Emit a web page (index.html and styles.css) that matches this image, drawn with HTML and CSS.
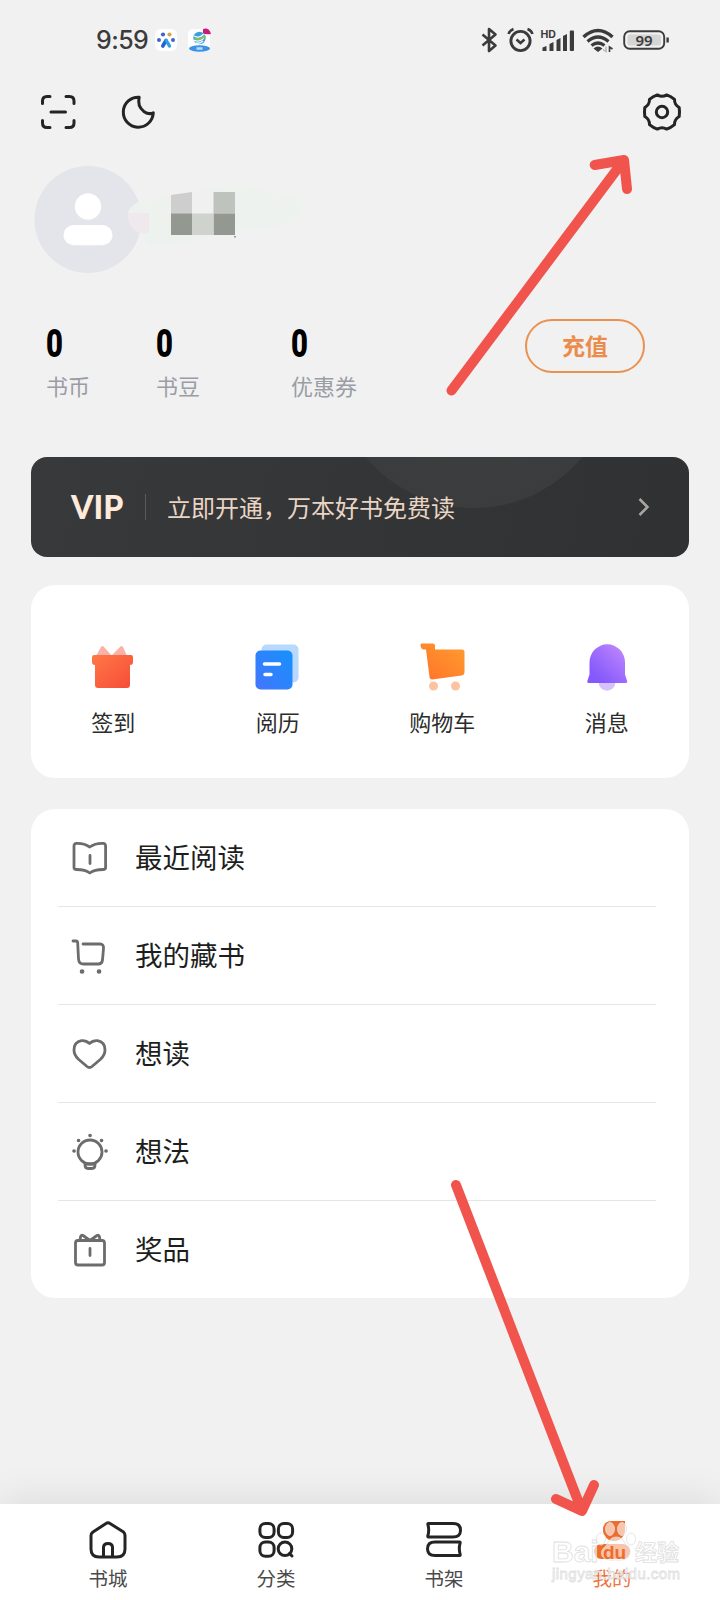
FILE: index.html
```html
<!DOCTYPE html>
<html lang="zh-CN">
<head>
<meta charset="utf-8">
<title>我的</title>
<link rel="stylesheet" href="styles.css">
</head>
<body>
<div class="screen">
  <header class="status">
    <span class="time">9:59</span>
    <svg class="app-a" width="24" height="24" viewBox="0 0 24 24"><rect x="1" y="1" width="22" height="22" rx="6" fill="#fff"/><g fill="#4264c8"><circle cx="9" cy="6.500" r="2.100"/><circle cx="5" cy="12" r="2"/><circle cx="19" cy="12" r="2"/></g><circle cx="15.500" cy="6.500" r="2.100" fill="#d3a550"/><path d="M8.800 18L12 12.500" fill="none" stroke="#2563cf" stroke-width="3.600" stroke-linecap="round"/><path d="M12.300 12.500l3.200 5.500" stroke="#2fa0e4" stroke-width="3.400" stroke-linecap="round"/></svg>
    <svg class="app-b" width="26" height="26" viewBox="0 0 26 26"><rect x="1" y="2" width="22" height="22" rx="5" fill="#fff"/><circle cx="12.500" cy="11" r="6.200" fill="#3e9fd8"/><path d="M7 9q5 3 10-2M7 13q5 3 10-2M9 16q4 1 7-2" stroke="#fff" stroke-width="1.300" fill="none"/><path d="M8 11q5 3 10-2" stroke="#8fc652" stroke-width="1.800" fill="none"/><path d="M16 2q6-2 8 5-6 1-8-1z" fill="#c91b77"/><ellipse cx="12.500" cy="21.500" rx="10.500" ry="3.200" fill="#3c92e4"/><path d="M9.500 21.500h6" stroke="#b7dcfa" stroke-width="2.500"/></svg>
    <div class="status-right">
      <svg width="192" height="30" viewBox="0 0 192 30" fill="none" stroke="#3b3b3b" stroke-width="2.600">
        <path d="M2.500 9.500l13 11-6.500 5.500V4l6.500 5.500-13 11" stroke-linejoin="round" stroke-width="2.600"/>
        <circle cx="40.500" cy="16" r="9.600" stroke-width="2.900"/><path d="M36.500 14.500l4 3.500 4-3.500M28.500 9q1-3.500 5-5M52.500 9q-1-3.500-5-5" stroke-width="2.500"/>
        <g fill="#3b3b3b" stroke="none"><path d="M62.500 22.500l4-1.500v5h-4zM69.500 19l4-2v9h-4zM76.500 15l4-2v13h-4zM83 11l4-2v17h-4z"/><rect x="89.800" y="5.500" width="4.200" height="20.500" rx="1"/><path d="M113.500 23.500q4.500-4 9 0L118 27z"/></g>
        <path d="M103.500 12q14.500-13 29 0" stroke-width="3.500"/><path d="M107.500 16.500q10.500-9 21 0M111.500 20.500q6.500-5 13 0" stroke-width="3.200"/>
        <path d="M126 21.500v5l-3-2" stroke="#b8b8b8" stroke-width="1.500"/><path d="M129.500 27v-5l3 2" stroke-width="1.600"/>
        <rect x="144.200" y="6.200" width="40" height="17.600" rx="5.500" stroke-width="1.900"/><rect x="147.500" y="9.500" width="33.500" height="11" rx="2.500" fill="#d5d5d5" stroke="none"/><path d="M187.600 12.500v5" stroke-width="2.400"/>
        <text x="60.500" y="12.800" class="hd">HD</text><text x="164" y="20.700" class="battery">99</text>
      </svg>
    </div>
  </header>

  <nav class="toolbar">
    <svg width="36" height="36" viewBox="0 0 36 36" class="line"><path d="M2.500 9.500V7Q2.500 2.500 7 2.500H10M26 2.500h3.500Q34 2.500 34 7v2.500M34 26.500V29q0 4.500-4.500 4.500H26M10 33.500H7Q2.500 33.500 2.500 29V26.500M11 18h14.500"/></svg>
    <svg class="moon" width="36" height="36" viewBox="0 0 36 36"><path class="line" d="M19.200 3.200A15 15 0 1 0 33.300 18.800Q29 21 23.800 17.400Q17 12 19.200 3.200z"/></svg>
    <svg class="gear" width="40" height="40" viewBox="-20 -20 40 40"><path class="line" d="M17.200-4.500Q17.800 0 17.200 4.500Q12.400 7.200 12.500 12.600Q9 15.600 4.700 17.100Q0 14.300 -4.700 17.100Q-9 15.600 -12.500 12.600Q-12.400 7.200 -17.200 4.500Q-17.800 0 -17.200-4.500Q-12.400-7.200 -12.500-12.600Q-9-15.600 -4.700-17.100Q0-14.300 4.700-17.100Q9-15.600 12.500-12.600Q12.400-7.200 17.200-4.500z"/><circle class="line" r="5.700"/></svg>
  </nav>

  <section class="profile">
    <svg width="290" height="108" viewBox="0 0 290 108">
      <circle cx="54" cy="53.500" r="53.500" fill="#e4e5eb"/><circle cx="54" cy="40.500" r="13.200" fill="#fff"/><rect x="29.500" y="59" width="49" height="20.300" rx="10.100" fill="#fff"/>
      <path d="M94 46q5-11 21-12l75-14q20-4 35 3l30 6q15 2 14 12-1 14-18 18l-48 6-40 9q-22 6-47 6-6-6-9-14-9-2-13-20z" fill="#eef2ef"/><path d="M94 47h21v20q-17 2-21-14z" fill="#efe9ed"/>
      <path d="M137 29l21-3v22h-21z" fill="#cecece"/><path d="M158 26h21.500v21.500H158z" fill="#f0f0f0"/><path d="M179.500 26H201v21.500h-21.500z" fill="#bec4bd"/><path d="M137 47.500h21V69h-21zM179.500 47.500H201V69h-21.500z" fill="#939991"/><path d="M158 47.500h21.500V69H158z" fill="#ced3cd"/><path d="M200 70h2v1.500h-2z" fill="#999"/>
    </svg>
  </section>

  <section class="stats">
    <div class="stat stat-coin"><b>0</b><span>书币</span></div>
    <div class="stat stat-bean"><b>0</b><span>书豆</span></div>
    <div class="stat"><b>0</b><span>优惠券</span></div>
    <button class="recharge">充值</button>
  </section>

  <section class="vip">
    <strong>VIP</strong>
    <i></i>
    <span>立即开通，万本好书免费读</span>
    <svg class="chevron" width="14" height="20" viewBox="0 0 14 20"><path d="M2.500 2L10.500 10l-8 8" fill="none" stroke="#aaa6a2" stroke-width="2.500"/></svg>
  </section>

  <section class="shortcuts">
    <a><svg width="48" height="48" viewBox="1 0 48 48"><defs><linearGradient id="red" x2="1" y2="1"><stop stop-color="#ff7946"/><stop offset="1" stop-color="#f64b38"/></linearGradient></defs><path d="M8 13l5-9q1.500-2 3 0l8 9zM23 13l9-9q1.500-2 3 0l4 9z" fill="#f9b1a8"/><path d="M6 12h37q2 0 2 2v5q0 3-3 3v20q0 3-3 3H10q-3 0-3-3V22q-3 0-3-3v-5q0-2 2-2z" fill="url(#red)"/></svg><span>签到</span></a>
    <a><svg width="48" height="48" viewBox="2 0.500 48 48"><defs><linearGradient id="blue" x1="1" x2="0" y2="1"><stop stop-color="#1592fa"/><stop offset="1" stop-color="#4475ff"/></linearGradient></defs><rect x="9.500" y="2" width="37" height="38" rx="5" fill="#b8d8fd"/><rect x="3.500" y="8" width="37" height="39" rx="5" fill="url(#blue)"/><path d="M12.500 21.500h15M13 32h6" stroke="#fff" stroke-width="3.500" stroke-linecap="round"/></svg><span>阅历</span></a>
    <a><svg width="48" height="48" viewBox="0 1 48 48"><defs><linearGradient id="orange" x1="1" x2="0" y2="1"><stop stop-color="#ff9d2e"/><stop offset="1" stop-color="#ff722a"/></linearGradient></defs><path d="M3.500 1.500H15q2 0 2 2v4h27q2.500 0 2.500 2.500v20q0 3-3 3.500L14 37.500q-2 0-2.400-2L8 7.500H6Q3.500 7.500 2.500 4q-.5-2.500 1-2.500z" fill="url(#orange)"/><circle cx="15.500" cy="44" r="4.500" fill="#fbc3a0"/><circle cx="37.500" cy="44" r="4.500" fill="#fbc3a0"/></svg><span>购物车</span></a>
    <a><svg width="48" height="48" viewBox="0 0.500 48 48"><defs><linearGradient id="violet" x1="1" x2="0" y2="1"><stop stop-color="#c58bff"/><stop offset=".8" stop-color="#8559fb"/></linearGradient></defs><circle cx="24" cy="40" r="8.300" fill="#d6c1fd"/><path d="M6 40.500q-2.500 0-1.500-2.500l2-6V20a17.500 18 0 0 1 35.500 0v12l2 6q1 2.500-1.500 2.500z" fill="url(#violet)"/></svg><span>消息</span></a>
  </section>

  <section class="list">
    <a><svg class="row-icon" viewBox="0 0 40 40"><path d="M19.800 9q-5.500-4-13.300-3.700Q4 5.500 4 8v21.500q0 2 2.500 2 9 0 13.300 3.500 4.400-3.500 13.300-3.500 2.500 0 2.500-2V8q0-2.500-2.500-2.700Q25 5 19.800 9zM20 17.500v8"/></svg><span>最近阅读</span></a>
    <a><svg class="row-icon" viewBox="0 0 40 40"><path d="M3 5h3q1.500 0 1.700 2L8.500 23q.3 5 5 5h14.500q4 0 4.500-4l1-11.500q.3-4.500-3.500-4.500H13"/><path class="dot" d="M12 35.500h.1M29 35.500h.1"/></svg><span>我的藏书</span></a>
    <a><svg class="row-icon" viewBox="0 0 40 40"><path d="M19.500 9.500Q16 6.200 11.500 6.600 4 8 4 16q0 5 4.500 9.300l8.500 7.200q2.500 2 5 0l8.500-7.200Q35 21 35 16q0-8-7.500-9.400-4.500-.4-8 2.900z"/></svg><span>想读</span></a>
    <a><svg class="row-icon" viewBox="0 0 40 40"><circle cx="20" cy="20" r="12"/><path d="M15 31.500v1.500q0 3.500 3 3.500h4q3 0 3-3.500v-1.500M15 32h10"/><path class="dot spark" d="M20 3.500h.1M8.500 8.500h.1M31.500 8.500h.1M4 19h.1M36 19h.1"/></svg><span>想法</span></a>
    <a><svg class="row-icon" viewBox="0 0 40 40"><rect x="5.500" y="10.500" width="29" height="24.500" rx="2.500"/><path d="M20 18.500v7M20 10.500l-7-5Q11 4.500 10.500 7l-.5 3.500M20 10.500l7-5q2-1 2.500 1.500l.5 3.500"/></svg><span>奖品</span></a>
  </section>

  <footer class="tabs">
    <a><svg width="40" height="42" viewBox="0 0 40 42"><path class="line" d="M18 4.500q2-1.500 4 0L35.500 13Q37 14.500 37 16.500V30q0 8-8 8h-18q-8 0-8-8V16.500q0-2 2-3.500zM15.500 37.500V28.500q0-4 4.500-4t4.500 4v9"/></svg><span>书城</span></a>
    <a><svg width="40" height="42" viewBox="0 0 40 42"><g class="line"><rect x="3.900" y="4.400" width="14.200" height="14.200" rx="5.500"/><rect x="22.400" y="4.400" width="14.200" height="14.200" rx="5.500"/><rect x="3.900" y="23" width="14.200" height="14.200" rx="5.500"/><circle cx="29" cy="29.800" r="6.800"/><path d="M33.500 34.500l2.500 2.500"/></g></svg><span>分类</span></a>
    <a><svg width="40" height="42" viewBox="0 0 40 42"><g class="line"><path d="M4.500 4.400H29q7.500 0 7.500 6.800T29 18H4.500q-1 0-.6-1.500Q5.500 11 3.900 5.500q-.3-1.100.6-1.100zM35.500 23H11q-7.500 0-7.500 6.800t7.500 6.800h24.500q1 0 .6-1.500-1.600-5.500 0-11 .3-1.100-.6-1.100z"/></g></svg><span>书架</span></a>
    <a class="active"><svg width="40" height="42" viewBox="0 0 40 42"><path d="M20 2h13v9a11 11 0 0 1-22 0Q11 2 20 2z" fill="#ee6d2d"/><rect x="2" y="25" width="36" height="15" rx="7.500" fill="#ee6d2d"/></svg><span>我的</span></a>
  </footer>

  <svg class="overlay" width="720" height="1600" viewBox="0 0 720 1600">
    <g class="watermark">
      <text x="552" y="1562" class="wm-big">Bai</text><text x="635" y="1560" class="wm-cn">经验</text><text x="552" y="1579" textLength="128" class="wm-small">jingyan.baidu.com</text>
      <ellipse cx="610" cy="1529" rx="4.500" ry="6.500"/><ellipse cx="622" cy="1529" rx="4.500" ry="6.500"/><ellipse cx="601" cy="1539" rx="4.500" ry="6"/><ellipse cx="631" cy="1539" rx="4.500" ry="6"/><path d="M616 1537q7 0 10 8 6 5 3 11-3 5-13 4-11 1-14-4-2-6 4-10 4-9 10-9z"/>
      <text x="603" y="1559" class="wm-du">du</text>
    </g>
    <g class="arrows"><path d="M451.500 390.500L624 160M594.700 165l29.300-5 3 29M456 1185l126 326M556 1499l26 12 12-26"/></g>
  </svg>
</div>
</body>
</html>
```
FILE: styles.css
```css
* { box-sizing: border-box; }
body { margin: 0; background: #f1f1f1; font-family: "Noto Sans CJK SC", sans-serif; color: #1d1e20; }
.screen { position: relative; width: 720px; height: 1600px; display: flex; flex-direction: column; overflow: hidden; }
.status { height: 80px; padding: 0 48px 0 96px; display: flex; align-items: center; flex: none; }
.time { width: 58px; font: 500 25px/30px Inter, sans-serif; color: #3b3b3b; letter-spacing: -.6px; white-space: nowrap; }
.app-b { margin-left: 9px; }
.status-right { margin-left: auto; display: flex; }
.hd { font: 700 10.5px Inter, sans-serif; fill: #3b3b3b; stroke: none; }
.battery { font: 600 15px "Noto Sans", sans-serif; fill: #3b3b3b; stroke: none; text-anchor: middle; }
.line { fill: none; stroke: #242424; stroke-width: 3; stroke-linecap: round; stroke-linejoin: round; }
.toolbar { height: 64px; padding: 0 38px 0 40px; display: flex; align-items: center; flex: none; }
.moon { margin-left: 44px; }
.gear { margin-left: auto; }
.profile { height: 175px; padding: 22px 0 0 34px; flex: none; }
.profile svg { display: block; }
.stats { height: 138px; padding: 0 75px 0 46px; display: flex; align-items: flex-start; flex: none; }
.stat { display: flex; flex-direction: column; align-items: flex-start; }
.stat-coin { width: 110px; }
.stat-bean { width: 135px; }
.stat b { height: 50px; font: 900 38px/50px Roboto, sans-serif; color: #000; transform: scaleX(.77); transform-origin: 0 50%; }
.stat span { font-size: 22px; line-height: 32px; color: #9b9da5; }
.recharge { width: 120px; height: 54px; margin-left: auto; padding: 0 0 2px; border: 2px solid #eb9150; border-radius: 27px; background: none; color: #ec8c4b; font: 700 23px/34px "Noto Sans CJK SC", sans-serif; }
.vip { height: 100px; margin: 0 31px; padding: 0 38px 0 40px; display: flex; align-items: center; flex: none; border-radius: 16px; background: radial-gradient(circle at 443px -89px, #3f4141 0, #3a3c3d 139.500px, transparent 140.500px), linear-gradient(100deg, #37393b, #303133); }
.vip strong { width: 56px; font: 900 32px/40px Lato, sans-serif; color: #ffeadb; white-space: nowrap; }
.vip i { width: 1px; height: 26px; margin: 0 21px 0 18px; background: #5b5a59; }
.vip span { margin-top: -1px; font-size: 24px; line-height: 34px; color: #ead4c4; white-space: nowrap; }
.chevron { margin-left: auto; }
.shortcuts { height: 193px; margin: 28px 31px 31px; padding-top: 58px; display: grid; grid-template-columns: repeat(4, 1fr); flex: none; border-radius: 24px; background: #fff; }
.shortcuts a { display: flex; flex-direction: column; align-items: center; }
.shortcuts svg { overflow: visible; }
.shortcuts span { margin-top: 14px; font-size: 22px; line-height: 32px; color: #2c2c2c; }
.list { height: 489px; margin: 0 31px; padding: 0 33px 0 27px; flex: none; border-radius: 24px; background: #fff; }
.list a { height: 98px; padding-left: 13px; display: flex; align-items: center; border-bottom: 1px solid #e6e6e6; }
.list a:last-child { border: 0; }
.row-icon { width: 40px; height: 40px; margin: 0 25px 0 -1px; fill: none; stroke: #6c6c6e; stroke-width: 2.8; stroke-linecap: round; stroke-linejoin: round; }
.row-icon .dot { stroke-width: 4.6; }
.row-icon .spark { stroke-width: 3.6; }
.list span { padding-bottom: 4px; font-size: 27.500px; line-height: 40px; }
.tabs { height: 96px; margin-top: auto; padding: 0 24px; display: grid; grid-template-columns: repeat(4, 168px); flex: none; background: #fff; box-shadow: 0 -4px 42px rgba(0, 0, 0, .09); }
.tabs a { padding-top: 15px; display: flex; flex-direction: column; align-items: center; }
.tabs span { margin-top: 2px; font-size: 19.500px; line-height: 30px; color: #4a4a4a; }
.tabs .active span { color: #ee7440; }
.overlay { position: absolute; inset: 0; pointer-events: none; }
.arrows { fill: none; stroke: #f0544c; stroke-width: 10; stroke-linecap: round; stroke-linejoin: round; }
.watermark { fill: rgba(255, 255, 255, .6); stroke: #e0e0e0; stroke-width: .8; }
.wm-big { font: 700 30px "Liberation Sans", sans-serif; }
.wm-cn { font: 700 22px "Noto Sans CJK SC", sans-serif; }
.wm-small { font: 15px "Liberation Sans", sans-serif; fill: rgba(255, 255, 255, .35); }
.wm-du { font: 700 19px "Liberation Sans", sans-serif; fill: #ee6d2d; stroke: none; }
```
